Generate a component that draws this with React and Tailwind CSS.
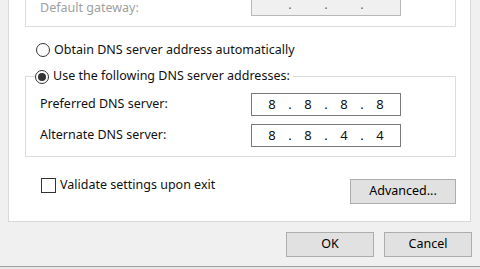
import React from 'react';

const font = { fontFamily: '"Noto Sans", "Open Sans", Arial, sans-serif' };

const Radio = ({ checked }) => (
  <span className="flex h-[14px] w-[14px] shrink-0 items-center justify-center rounded-full border border-[#333] bg-white">
    {checked && <span className="h-[8px] w-[8px] rounded-full bg-[#333]" />}
  </span>
);

const IpBox = ({ parts, disabled }) => (
  <div
    className={
      'flex h-[23px] w-[150px] items-center border pl-[5px] text-[13px] ' +
      (disabled ? 'border-[#b8b8b8] bg-[#f0f0f0] text-[#6d6d6d]' : 'border-[#7a7a7a] bg-white text-[#111]')
    }
  >
    {parts.map((p, i) => (
      <React.Fragment key={i}>
        {i > 0 && <span className="w-[6px] text-center">.</span>}
        <span className="w-[30px] text-center">{p}</span>
      </React.Fragment>
    ))}
  </div>
);

const Button = ({ children, className = '' }) => (
  <button className={'flex h-[25px] items-center justify-center border border-[#adadad] bg-[#e1e1e1] text-[12.5px] text-black ' + className}>
    {children}
  </button>
);

export default function App() {
  return (
    <div className="flex h-[269px] w-[480px] flex-col overflow-hidden bg-[#f0f0f0] text-[12.5px] text-[#111]" style={font}>
      <div className="ml-[8px] flex h-[222px] w-[463px] flex-col border-x border-b border-[#d9d9d9] bg-white">
        <div className="ml-[16px] h-[27px] w-[431px] border-x border-b border-[#dcdcdc]">
          <div className="-mt-[7px] flex items-start pl-[14px]">
            <span className="mt-[9px] w-[211px] leading-none text-[#a0a0a0]">Default gateway:</span>
            <IpBox parts={['', '', '', '']} disabled />
          </div>
        </div>

        <div className="ml-[27px] mt-[16px] flex h-[14px] items-center gap-[4px]">
          <Radio />
          <span className="leading-none">Obtain DNS server address automatically</span>
        </div>

        <div className="ml-[16px] mt-[19px] w-[431px] border border-[#dcdcdc] pb-[9px]">
          <div className="-mt-[9px] ml-[9px] flex h-[17px] w-fit items-center gap-[4px] bg-white pr-[3px]">
            <Radio checked />
            <span className="leading-none">Use the following DNS server addresses:</span>
          </div>
          <div className="mt-[8px] flex items-center pl-[14px]">
            <span className="w-[211px]">Preferred DNS server:</span>
            <IpBox parts={['8', '8', '8', '8']} />
          </div>
          <div className="mt-[8px] flex items-center pl-[14px]">
            <span className="w-[211px]">Alternate DNS server:</span>
            <IpBox parts={['8', '8', '4', '4']} />
          </div>
        </div>

        <div className="ml-[16px] mt-[21px] flex w-[431px] items-start justify-between">
          <div className="ml-[16px] flex h-[15px] items-center gap-[4px]">
            <span className="h-[15px] w-[15px] border border-[#333] bg-white" />
            <span className="leading-none">Validate settings upon exit</span>
          </div>
          <Button className="mt-[1px] w-[106px]">Advanced...</Button>
        </div>
      </div>

      <div className="mt-[10px] flex justify-end gap-[10px] pr-[8px]">
        <Button className="w-[88px]">OK</Button>
        <Button className="w-[88px]">Cancel</Button>
      </div>

      <div className="mt-[9px] h-[1px] bg-[#a0a0a0]" />
      <div className="flex-1 bg-[#e6e6e6]" />
    </div>
  );
}
